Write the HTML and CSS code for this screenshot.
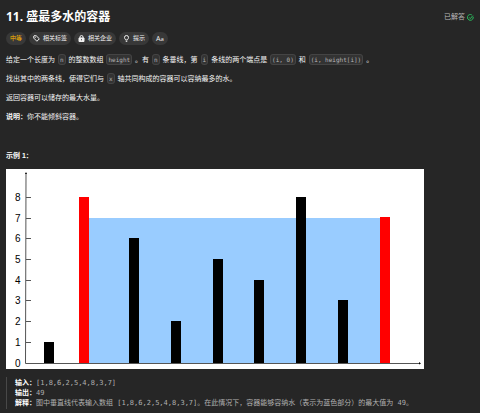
FILE: index.html
```
<!DOCTYPE html>
<html lang="zh-CN">
<head>
<meta charset="utf-8">
<title>11. 盛最多水的容器</title>
<link rel="stylesheet" href="styles.css">
</head>
<body>
<main class="problem">
  <header class="head">
    <h1 class="title">11. 盛最多水的容器</h1>
    <div class="solved">已解答
      <svg class="check" viewBox="0 0 14 14" aria-hidden="true"><path d="M12.3 5.5A5.8 5.8 0 1 1 9.6 1.8M4.3 6.8l2.3 2.4 5.2-6"/></svg>
    </div>
  </header>
  <div class="tags">
    <button class="tag level">中等</button>
    <button class="tag"><svg class="icon" viewBox="0 0 14 14" aria-hidden="true"><path d="M1.5 2v4.2l6.3 6.3 4.9-4.9-6.3-6.1H2z"/><circle cx="4.6" cy="4.6" r=".4"/></svg>相关标签</button>
    <button class="tag"><svg class="icon" viewBox="0 0 14 14" aria-hidden="true"><path class="solid" d="M2 6h10v7H2z"/><path d="M4 6V4a3 3 0 0 1 6 0v2"/><path class="hole" d="M7 8.5v2"/></svg>相关企业</button>
    <button class="tag"><svg class="icon" viewBox="0 0 14 14" aria-hidden="true"><path d="M5.2 10C5.2 8.4 3 7.7 3 5a4 4 0 0 1 8 0c0 2.7-2.2 3.4-2.2 5zM5.5 12.7h3"/></svg>提示</button>
    <button class="tag last"><span>A<small>a</small></span></button>
  </div>
  <section class="text">
    <p>给定一个长度为 <code>n</code> 的整数数组 <code>height</code> 。有 <code>n</code> 条垂线，第 <code>i</code> 条线的两个端点是 <code>(i, 0)</code> 和 <code>(i, height[i])</code> 。</p>
    <p>找出其中的两条线，使得它们与 <code>x</code> 轴共同构成的容器可以容纳最多的水。</p>
    <p>返回容器可以储存的最大水量。</p>
    <p><strong>说明：</strong>你不能倾斜容器。</p>
  </section>
  <h2 class="example">示例 1：</h2>
  <svg class="chart" viewBox="0 0 418 200" role="img" aria-label="容器">
    <rect class="paper" width="418" height="200"/>
    <rect class="water" x="83" y="49" width="291" height="145"/>
    <g class="wall">
      <rect x="73" y="28" width="10" height="166"/>
      <rect x="374" y="48" width="10" height="146"/>
    </g>
    <g class="bars">
      <rect x="38" y="173" width="10" height="21"/>
      <rect x="123" y="69" width="10" height="125"/>
      <rect x="165" y="152" width="10" height="42"/>
      <rect x="207" y="90" width="10" height="104"/>
      <rect x="248" y="111" width="10" height="83"/>
      <rect x="290" y="28" width="10" height="166"/>
      <rect x="332" y="131" width="10" height="63"/>
    </g>
    <path class="axis" d="M20 4L19.5 194.5H414M20 28.5h5M20 49.5h5M20 69.5h5M20 90.5h5M20 111.5h5M20 131.5h5M20 152.5h5M20 173.5h5"/>
    <path class="tip" d="M19 5l1-2 1 2zM413 193l2 1.5-2 1z"/>
    <g class="nums">
      <text x="9" y="32">8</text>
      <text x="9" y="53">7</text>
      <text x="9" y="73">6</text>
      <text x="9" y="94">5</text>
      <text x="9" y="115">4</text>
      <text x="9" y="135">3</text>
      <text x="9" y="156">2</text>
      <text x="9" y="177">1</text>
      <text x="9" y="198">0</text>
    </g>
  </svg>
  <pre class="sample"><strong>输入：</strong>[1,8,6,2,5,4,8,3,7]
<strong>输出：</strong>49
<strong>解释：</strong>图中垂直线代表输入数组 [1,8,6,2,5,4,8,3,7]。在此情况下，容器能够容纳水（表示为蓝色部分）的最大值为 49。</pre>
</main>
</body>
</html>
```
FILE: styles.css
```
* { box-sizing: border-box; }
body {
  margin: 0;
  background: #262626;
  color: #f5f5f5;
  font: 7px/12px "Liberation Sans", "Noto Sans CJK SC", sans-serif;
}
.problem { padding: 10px 6px 0; }
.head {
  display: flex;
  justify-content: space-between;
  align-items: center;
  height: 14px;
}
.title {
  margin: 0;
  font: 700 12px/14px "Open Sans", "Noto Sans CJK SC", sans-serif;
  color: #fff;
}
.solved {
  display: flex;
  align-items: center;
  gap: 2px;
  color: #b8b8b8;
}
.check {
  width: 7px;
  height: 7px;
  fill: none;
  stroke: #2cbb5d;
  stroke-width: 2;
}
.tags {
  display: flex;
  gap: 3px;
  margin-top: 8px;
}
.tag {
  display: flex;
  align-items: center;
  gap: 3px;
  height: 13px;
  padding: 0 4px;
  border: 0;
  border-radius: 7px;
  background: #383838;
  color: #f0f0f0;
  font: 6px/13px "Open Sans", "Noto Sans CJK SC", sans-serif;
}
.level { color: #ffb800; }
.last { font-size: 7px; }
.last small { font-size: 6px; }
.icon {
  width: 7px;
  height: 7px;
  fill: none;
  stroke: #f0f0f0;
  stroke-width: 2;
}
.icon .solid { fill: #f0f0f0; }
.icon .hole { stroke: #383838; }
.text { margin-top: 9px; }
.text p { margin: 0 0 7px; line-height: 12px; }
.text code {
  margin: 0 1px;
  padding: 1px;
  border: 1px solid #444;
  border-radius: 3px;
  background: #333;
  color: #b8b8b8;
  font: 6px/8px "DejaVu Sans Mono", monospace;
}
.example {
  margin: 27px 0 7px;
  font-size: 7px;
  line-height: 12px;
  color: #fff;
}
.chart {
  display: block;
  width: 418px;
  max-width: 100%;
  height: auto;
}
.paper { fill: #fff; }
.water { fill: #99ccff; }
.wall { fill: #f00; }
.bars { fill: #000; }
.axis { fill: none; stroke: #555; }
.tip { fill: #000; }
.nums { font: 10px "Liberation Sans", sans-serif; fill: #000; }
.sample {
  margin: 8px 0 0;
  padding: 1px 0 1px 8px;
  border-left: 1px solid #484848;
  color: #b0b0b0;
  font: 7px/10px "DejaVu Sans Mono", "Noto Sans CJK SC", monospace;
}
.sample strong { color: #fff; }
```
